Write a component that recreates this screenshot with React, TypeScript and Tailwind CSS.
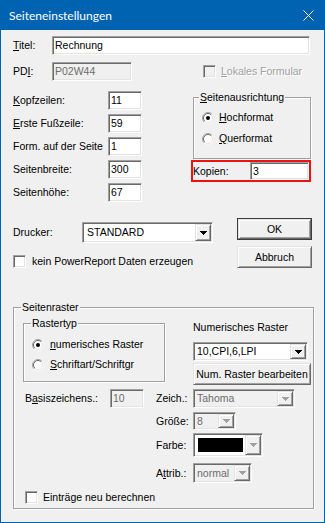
import React from "react";

const sunken =
  "border border-t-[#a0a0a0] border-l-[#a0a0a0] border-b-white border-r-white shadow-[inset_1px_1px_0_#696969,inset_-1px_-1px_0_#e3e3e3]";
const raised =
  "border border-t-[#e3e3e3] border-l-[#e3e3e3] border-b-[#696969] border-r-[#696969] shadow-[inset_1px_1px_0_#fff,inset_-1px_-1px_0_#a0a0a0] bg-[#f0f0f0]";
const group = "border border-[#a0a0a0] shadow-[inset_1px_1px_0_#fff,1px_1px_0_#fff]";
const legend = "-mt-[7px] px-[1px] bg-[#f0f0f0] self-start";
const dimText = "text-[#a0a0a0] [text-shadow:1px_1px_0_#fff]";

function Arrow({ disabled }: { disabled?: boolean }) {
  const c = disabled ? "#a0a0a0" : "#000";
  return (
    <svg width="7" height="4" viewBox="0 0 7 4" shapeRendering="crispEdges">
      <rect x="0" y="0" width="7" height="1" fill={c} />
      <rect x="1" y="1" width="5" height="1" fill={c} />
      <rect x="2" y="2" width="3" height="1" fill={c} />
      <rect x="3" y="3" width="1" height="1" fill={c} />
    </svg>
  );
}

function Edit({ value, className, disabled }: { value: string; className: string; disabled?: boolean }) {
  return (
    <div
      className={`${sunken} ${className} ${
        disabled ? "bg-[#f0f0f0] text-[#6d6d6d]" : "bg-white"
      } flex items-center pl-[2px]`}
    >
      {value}
    </div>
  );
}

function Combo({
  className,
  disabled,
  white,
  children,
}: {
  className: string;
  disabled?: boolean;
  white?: boolean;
  children: React.ReactNode;
}) {
  return (
    <div
      className={`${sunken} ${className} ${
        disabled && !white ? "bg-[#f0f0f0] text-[#6d6d6d]" : "bg-white"
      } flex p-[1px]`}
    >
      <div className="flex-1 flex items-center pl-[2px] overflow-hidden whitespace-nowrap">{children}</div>
      <div className={`${raised} w-[16px] flex items-center justify-center`}>
        <Arrow disabled={disabled} />
      </div>
    </div>
  );
}

function Check({ disabled }: { disabled?: boolean }) {
  return <div className={`${sunken} w-[13px] h-[13px] ${disabled ? "bg-[#f0f0f0]" : "bg-white"}`} />;
}

function Radio({ checked }: { checked?: boolean }) {
  return (
    <svg width="12" height="12" viewBox="0 0 12 12">
      <circle cx="6" cy="6" r="5.5" fill="#fff" />
      <path d="M2.1 9.9 A5.5 5.5 0 0 1 9.9 2.1" stroke="#a0a0a0" fill="none" />
      <path d="M2.8 9.2 A4.5 4.5 0 0 1 9.2 2.8" stroke="#696969" fill="none" />
      <path d="M9.2 2.8 A4.5 4.5 0 0 1 2.8 9.2" stroke="#e3e3e3" fill="none" />
      {checked && <circle cx="6" cy="6" r="2" fill="#000" />}
    </svg>
  );
}

const leftFields = [
  { label: <><u>K</u>opfzeilen:</>, value: "11" },
  { label: <><u>E</u>rste Fußzeile:</>, value: "59" },
  { label: <>Form. auf der Seite</>, value: "1" },
  { label: <>Seitenbreite:</>, value: "300" },
  { label: <>Seitenhöhe:</>, value: "67" },
];

export default function App() {
  return (
    <div className="w-[325px] h-[523px] flex flex-col bg-[#0063b1] font-['Liberation_Sans',Arial,sans-serif] text-[10.5px] leading-[13px] text-black">
      {/* title bar */}
      <div className="h-[30px] shrink-0 flex items-center justify-between pl-[9px] pr-[11px] text-white font-['Lato',sans-serif] text-[12px]">
        <span>Seiteneinstellungen</span>
        <svg width="11" height="11" viewBox="0 0 11 11">
          <path d="M0.5 0.5 L10.5 10.5 M10.5 0.5 L0.5 10.5" stroke="#fff" strokeWidth="1" />
        </svg>
      </div>

      <div className="flex-1 mx-[1px] mb-[1px] bg-[#f0f0f0] flex flex-col pl-[12px]">
        {/* Titel */}
        <div className="mt-[6px] flex items-center h-[19px]">
          <span className="w-[39px]">
            <u>T</u>itel:
          </span>
          <Edit value="Rechnung" className="w-[258px] h-[19px]" />
        </div>

        {/* PDI */}
        <div className="mt-[7px] flex items-center h-[19px]">
          <span className="w-[39px]">
            PD<u>I</u>:
          </span>
          <Edit value="P02W44" className="w-[80px] h-[19px]" disabled />
          <div className="ml-[71px]">
            <Check disabled />
          </div>
          <span className={`ml-[5px] ${dimText}`}>
            <u>L</u>okales Formular
          </span>
        </div>

        {/* fields + orientation */}
        <div className="mt-[10px] flex items-start">
          <div className="flex flex-col gap-[4px]">
            {leftFields.map((f, i) => (
              <div key={i} className="flex items-center h-[19px]">
                <span className="w-[95px] whitespace-nowrap">{f.label}</span>
                <Edit value={f.value} className="w-[34px] h-[19px]" />
              </div>
            ))}
          </div>

          <div className="ml-[49px] w-[120px] flex flex-col">
            <div className={`ml-[2px] mt-[6px] w-[118px] h-[62px] ${group} flex flex-col`}>
              <span className={`${legend} ml-[5px]`}>
                <u>S</u>eitenausrichtung
              </span>
              <div className="mt-[7px] ml-[8px] flex items-center gap-[5px]">
                <Radio checked />
                <span>
                  <u>H</u>ochformat
                </span>
              </div>
              <div className="mt-[8px] ml-[8px] flex items-center gap-[5px]">
                <Radio />
                <span>
                  <u>Q</u>uerformat
                </span>
              </div>
            </div>

            <div className="mt-[1px] h-[22px] border-2 border-[#ee1111] flex items-center">
              <span className="w-[57px]">Kopien:</span>
              <Edit value="3" className="w-[59px] h-[18px]" />
            </div>
          </div>
        </div>

        {/* Drucker + buttons */}
        <div className="mt-[16px] flex items-start">
          <div className="w-[200px] flex flex-col">
            <div className="mt-[4px] flex items-center">
              <span className="w-[69px]">Drucker:</span>
              <Combo className="w-[131px] h-[21px]">
                <span className="pl-[1px]">STANDARD</span>
              </Combo>
            </div>
            <div className="mt-[12px] flex items-center gap-[6px]">
              <Check />
              <span>kein PowerReport Daten erzeugen</span>
            </div>
          </div>

          <div className="ml-[24px] flex flex-col">
            <div className="w-[75px] h-[22px] border border-[#3c3c3c] flex">
              <div className={`${raised} flex-1 flex items-center justify-center`}>OK</div>
            </div>
            <div className={`${raised} mt-[6px] w-[75px] h-[22px] flex items-center justify-center`}>
              Abbruch
            </div>
          </div>
        </div>

        {/* Seitenraster */}
        <div className={`mt-[39px] w-[301px] h-[202px] ${group} flex flex-col`}>
          <span className={`${legend} ml-[7px]`}>Seitenraster</span>

          <div className="flex items-start">
            <div className={`ml-[9px] mt-[9px] w-[142px] h-[59px] ${group} flex flex-col`}>
              <span className={`${legend} ml-[7px]`}>Rastertyp</span>
              <div className="mt-[8px] ml-[8px] flex items-center gap-[6px]">
                <Radio checked />
                <span>
                  <u>n</u>umerisches Raster
                </span>
              </div>
              <div className="mt-[7px] ml-[8px] flex items-center gap-[6px]">
                <Radio />
                <span>
                  <u>S</u>chriftart/Schriftgr
                </span>
              </div>
            </div>

            <div className="ml-[28px] flex flex-col">
              <span className="mt-[7px]">Numerisches Raster</span>
              <Combo className="mt-[8px] w-[115px] h-[19px]">10,CPI,6,LPI</Combo>
              <div
                className={`${raised} mt-[2px] w-[118px] h-[22px] flex items-center justify-center whitespace-nowrap`}
              >
                Num. Raster bearbeiten
              </div>
            </div>
          </div>

          <div className="mt-[4px] flex items-start">
            <div className="ml-[11px] flex items-center h-[19px]">
              <span className="w-[85px]">
                B<u>a</u>siszeichens.:
              </span>
              <Edit value="10" className="w-[34px] h-[19px]" disabled />
            </div>

            <div className="ml-[12px] flex flex-col">
              <div className="flex items-center h-[19px]">
                <span className="w-[37px]">Zeich.:</span>
                <Combo className="w-[102px] h-[19px]" disabled>
                  Tahoma
                </Combo>
              </div>
              <div className="mt-[4px] flex items-center h-[18px]">
                <span className="w-[37px]">Größe:</span>
                <Combo className="w-[43px] h-[18px]" disabled>
                  8
                </Combo>
              </div>
              <div className="mt-[3px] flex items-center h-[24px]">
                <span className="w-[37px]">Farbe:</span>
                <Combo className="w-[70px] h-[24px]" disabled white>
                  <div className="ml-[1px] w-[45px] h-[14px] bg-black" />
                </Combo>
              </div>
              <div className="mt-[6px] flex items-center h-[20px]">
                <span className="w-[37px]">
                  A<u>t</u>trib.:
                </span>
                <Combo className="w-[59px] h-[20px]" disabled>
                  normal
                </Combo>
              </div>
            </div>
          </div>

          <div className="mt-[8px] ml-[11px] flex items-center gap-[5px]">
            <Check />
            <span>Einträge neu berechnen</span>
          </div>
        </div>
      </div>
    </div>
  );
}
